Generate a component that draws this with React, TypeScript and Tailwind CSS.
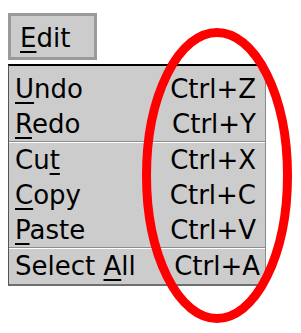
import React from "react";

const font = { fontFamily: '"DejaVu Sans", Verdana, sans-serif' };

function U({ children }: { children: React.ReactNode }) {
  return <span className="underline decoration-[2px] underline-offset-[4px]">{children}</span>;
}

function Row({ label, shortcut, pr = "pr-[9px]" }: { label: React.ReactNode; shortcut: string; pr?: string }) {
  return (
    <div className={`flex h-[35px] items-center justify-between pl-[6px] ${pr} leading-[35px]`}>
      <span>{label}</span>
      <span>{shortcut}</span>
    </div>
  );
}

function Sep() {
  return <div className="h-px bg-white shadow-[0_-1px_0_#8c8c8c]" />;
}

export default function App() {
  return (
    <div className="relative h-[333px] w-[301px] overflow-hidden bg-white text-[26px] text-black" style={font}>
      <div className="pl-[8px] pt-[13px]">
        <div className="flex h-[47px] w-[89px] items-start border-[3px] border-[#9a9a9a] bg-[#cccccc] pl-[9px] pt-[5px] leading-[35px]">
          <span><U>E</U>dit</span>
        </div>
        <div className="mt-[4px] w-[258px] border-t-2 border-b-2 border-l border-r border-t-black border-b-[#6e6e6e] border-l-[#555555] border-r-[#8a8a8a] bg-[#cccccc] pt-[6px]">
          <Row label={<><U>U</U>ndo</>} shortcut="Ctrl+Z" />
          <Row label={<><U>R</U>edo</>} shortcut="Ctrl+Y" />
          <Sep />
          <Row label={<>Cu<U>t</U></>} shortcut="Ctrl+X" />
          <Row label={<><U>C</U>opy</>} shortcut="Ctrl+C" />
          <Row label={<><U>P</U>aste</>} shortcut="Ctrl+V" />
          <Sep />
          <Row label={<>Select <U>A</U>ll</>} shortcut="Ctrl+A" pr="pr-[5px]" />
        </div>
      </div>
      <svg className="pointer-events-none absolute left-0 top-0" width="301" height="333" viewBox="0 0 301 333">
        <ellipse cx="217" cy="175.5" rx="70.5" ry="143" fill="none" stroke="#ff0000" strokeWidth="9" />
      </svg>
    </div>
  );
}
